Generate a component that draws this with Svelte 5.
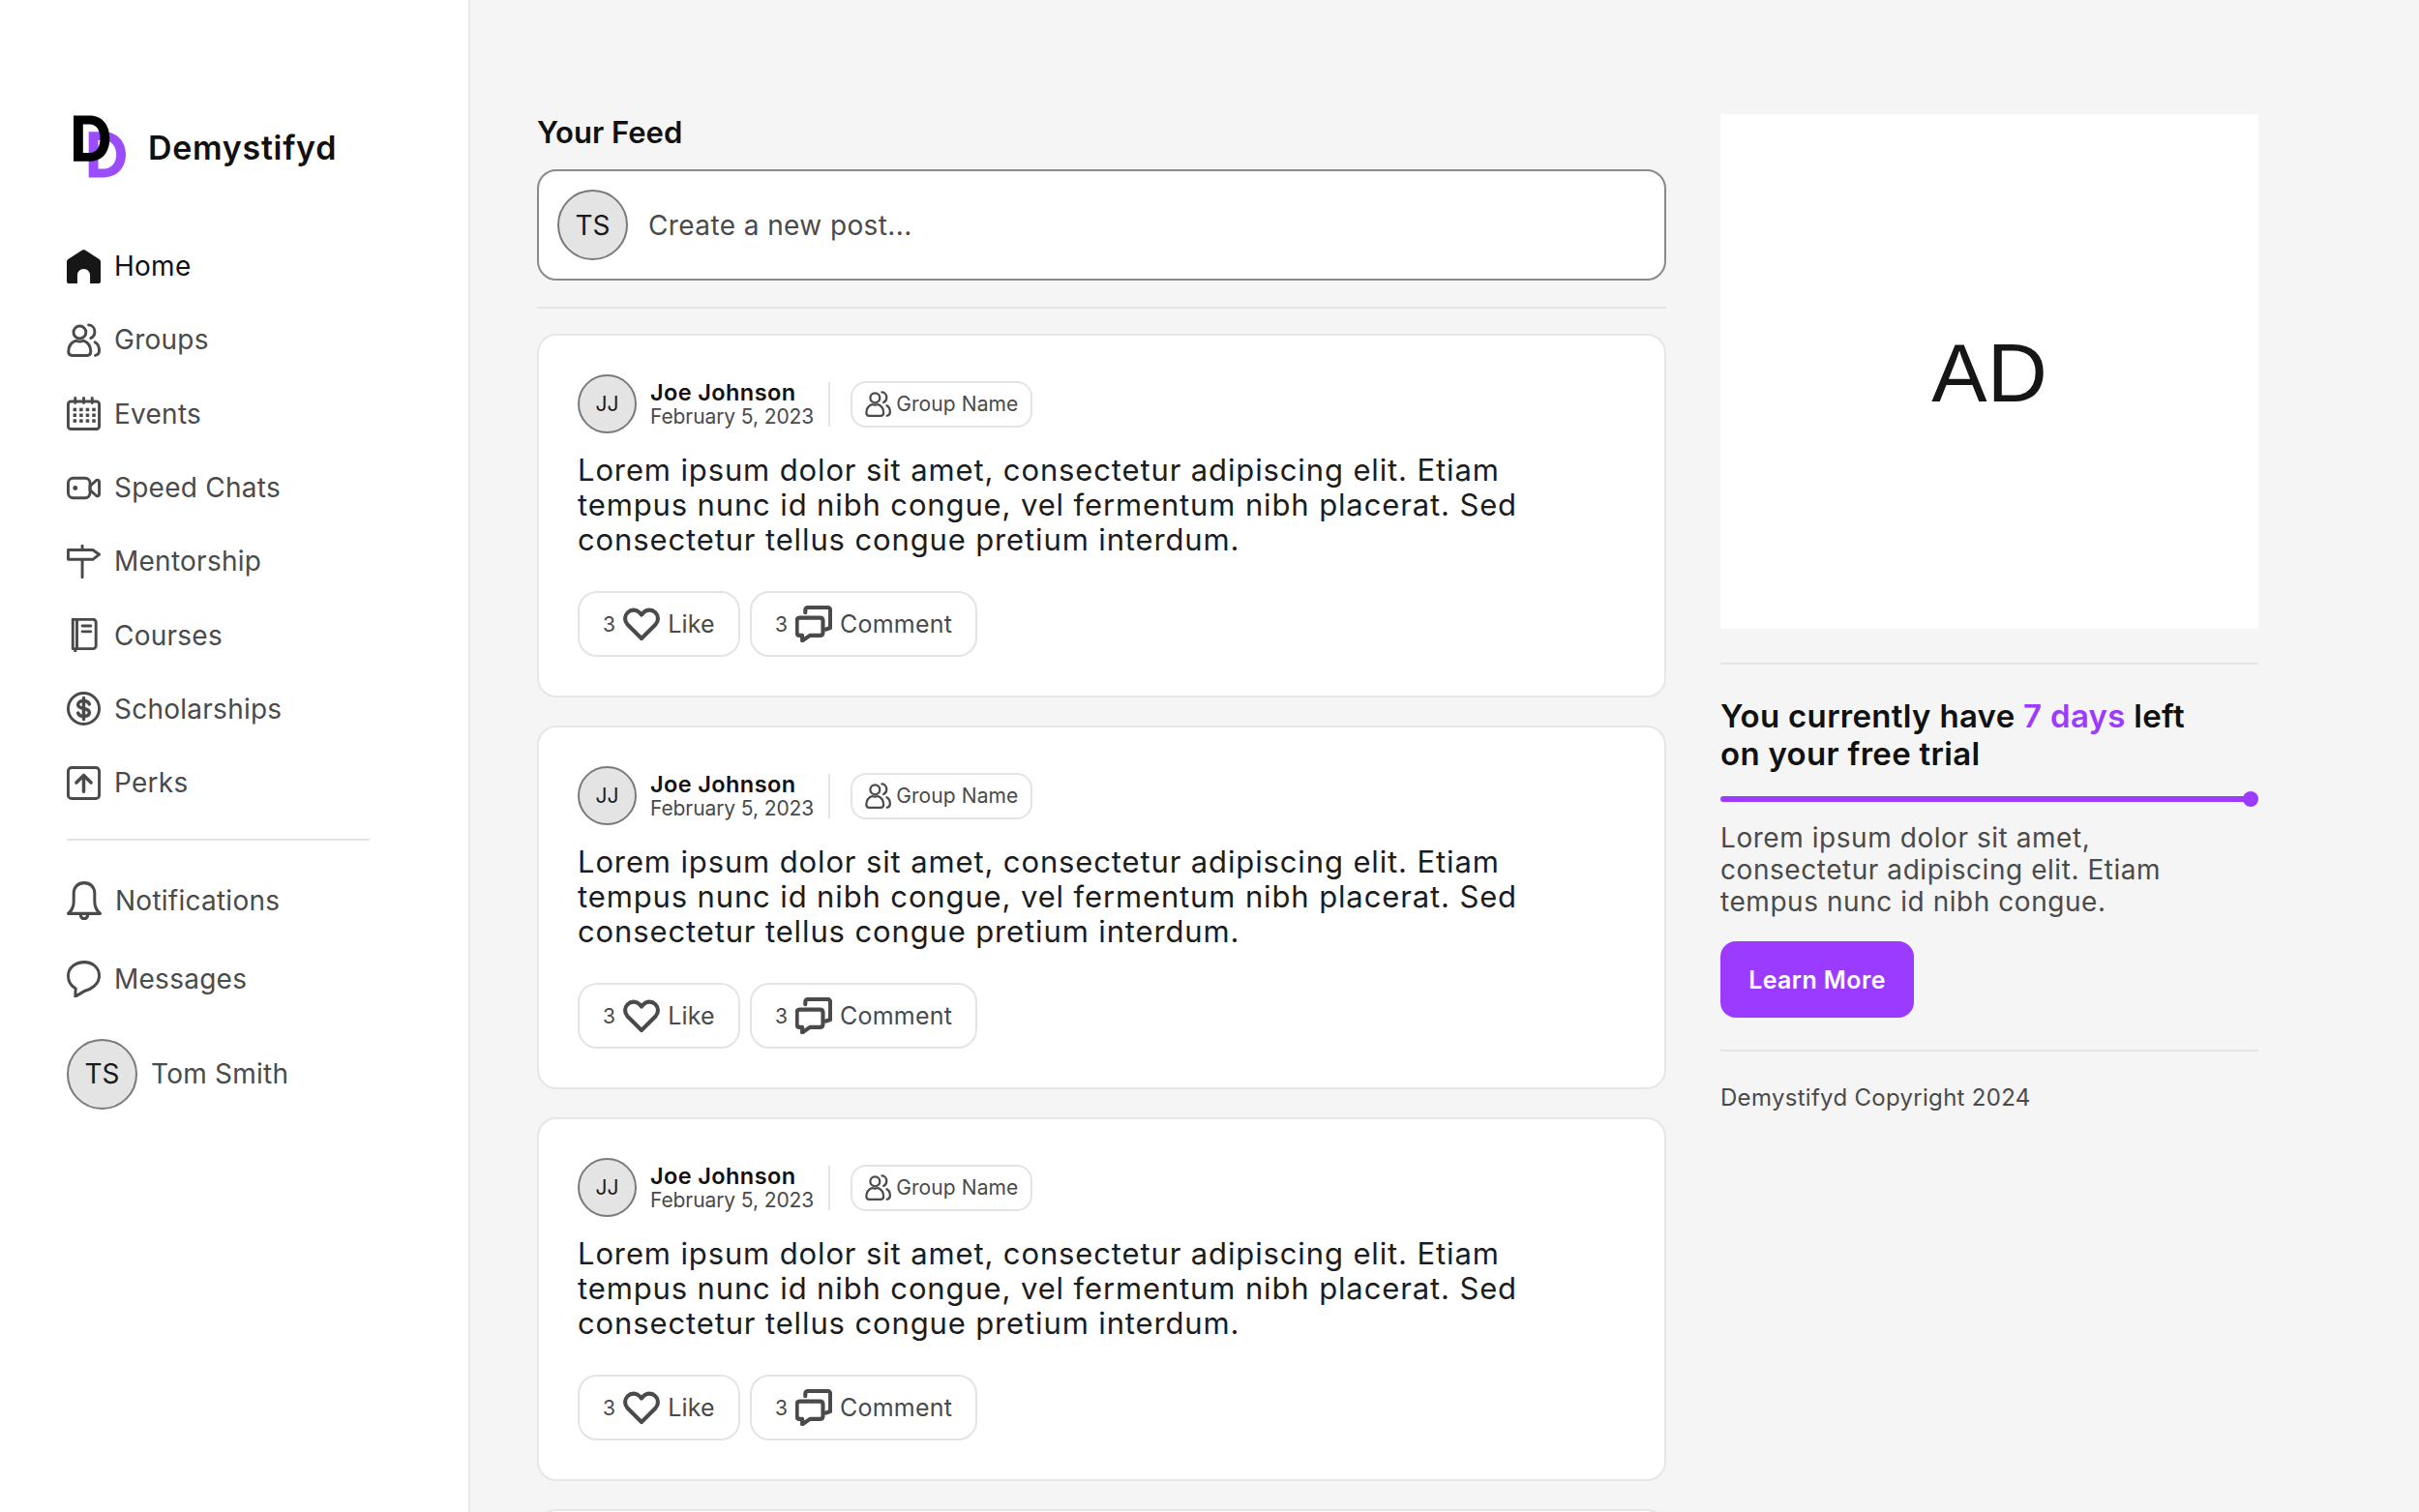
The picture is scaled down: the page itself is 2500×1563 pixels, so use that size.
<script>
  const nav = [
    { label: 'Home', icon: 'home', active: true },
    { label: 'Groups', icon: 'groups' },
    { label: 'Events', icon: 'events' },
    { label: 'Speed Chats', icon: 'video' },
    { label: 'Mentorship', icon: 'sign' },
    { label: 'Courses', icon: 'book' },
    { label: 'Scholarships', icon: 'dollar' },
    { label: 'Perks', icon: 'perks' }
  ];

  const posts = [1, 2, 3];
</script>

{#snippet icon(name)}
  <svg class="icon" viewBox="0 0 24 24" fill="none" stroke="currentColor" stroke-width="2" stroke-linecap="round" stroke-linejoin="round" preserveAspectRatio="none">
    {#if name === 'home'}
      <path fill="#161616" stroke="none" d="M11 .4c.6-.4 1.400-.4 2 0l9.800 6.200c.8.500 1.200 1.200 1.200 2.100V22.400c0 .9-.7 1.600-1.600 1.600H16.500V18.200c0-2.500-2-4.500-4.500-4.500s-4.500 2-4.500 4.500V24H1.600C.7 24 0 23.300 0 22.400V8.700c0-.9.400-1.600 1.200-2.100Z"/>
    {:else if name === 'groups'}
      <circle cx="9.200" cy="6.500" r="4.400"/>
      <path d="M1.200 20.300c0-4.300 2.700-6.800 5.300-7.800 1.700.7 3.600.7 5.300 0 2.600 1 5.200 3.500 5.200 7.800 0 1.700-1 2.700-2.600 2.700H3.800c-1.600 0-2.600-1-2.600-2.700Z"/>
      <path d="M15.500 1.300c2.600.1 4.300 2.300 4.300 4.900 0 2.100-1 3.700-2.800 4.500M20 13.500c2 1.100 3 3.400 3 5.900 0 1.800-.9 3.200-2.800 3.500"/>
    {:else if name === 'events'}
      <rect x="1" y="3.400" width="22" height="19.600" rx="2"/>
      <path d="M6 1v3.500M12 1v3.500M18 1v3.500"/>
      <g fill="currentColor" stroke="none">
        <rect x="4.500" y="8" width="2.400" height="2.400"/><rect x="9" y="8" width="2.400" height="2.400"/><rect x="13.500" y="8" width="2.400" height="2.400"/><rect x="18" y="8" width="2.400" height="2.400"/>
        <rect x="4.500" y="12" width="2.400" height="2.400"/><rect x="9" y="12" width="2.400" height="2.400"/><rect x="13.500" y="12" width="2.400" height="2.400"/><rect x="18" y="12" width="2.400" height="2.400"/>
        <rect x="4.500" y="16" width="2.400" height="2.400"/><rect x="9" y="16" width="2.400" height="2.400"/><rect x="13.500" y="16" width="2.400" height="2.400"/><rect x="18" y="16" width="2.400" height="2.400"/>
      </g>
    {:else if name === 'video'}
      <rect x="1" y="5" width="15.500" height="14" rx="3.500"/>
      <path d="m16.500 10.500 4.500-4c.8-.6 2 0 2 1v9c0 1-1.200 1.600-2 1l-4.500-4Z"/>
      <circle cx="6" cy="12" r=".7" fill="currentColor"/>
    {:else if name === 'sign'}
      <path d="M1 3.800h17.500L23 7 18.500 10.500H1ZM11 .8v3M11 10.500v12.700"/>
    {:else if name === 'book'}
      <path d="M5 .8h13.500c1.200 0 2.200 1 2.200 2.200v16.500c0 1.200-1 2.200-2.200 2.200H4.300V.8ZM7.200 .8v21M6 21.700v2.300M11 5.500h6M11 9.500h6"/>
    {:else if name === 'dollar'}
      <circle cx="12" cy="12" r="11"/>
      <path stroke-width="2.400" d="M16 8.800c-.5-1.400-2-2.300-4-2.300-2.200 0-4 1-4 2.800s1.800 2.300 4 2.700 4 1 4 2.800-1.800 2.700-4 2.700c-2 0-3.500-.9-4-2.300M12 4.500v15"/>
    {:else if name === 'perks'}
      <rect x="1" y="1" width="22" height="22" rx="2.500"/>
      <path stroke-width="2.400" d="M12 18V6.500M6.800 11.700 12 6.500l5.200 5.200"/>
    {:else if name === 'bell'}
      <path d="M1 20c2.500-1.800 3.800-3.800 3.800-7.500V7.500C4.800 3.500 8 1 12 1s7.200 2.500 7.200 6.500v5c0 3.700 1.300 5.700 3.800 7.500ZM9.500 20c0 2 1 3.200 2.500 3.200s2.500-1.200 2.500-3.200"/>
    {:else if name === 'chat'}
      <path d="M12.500 1C18.500 1 23 4.800 23 10c0 5.500-6 8.700-10 9.700L6 23.500l.3-5.300C3 16.500 1 13.500 1 10 1 4.800 6 1 12.500 1Z"/>
    {:else if name === 'heart'}
      <path stroke-width="2.600" d="M12 21.500 2.800 12.300C.7 10 .9 6.500 3 4.500c2.300-2.200 5.700-2 7.800.2L12 6l1.200-1.300c2.100-2.200 5.500-2.400 7.800-.2 2.100 2 2.300 5.500.2 7.800Z"/>
    {:else if name === 'comment'}
      <path stroke-width="2.600" d="M3 8h13c1.200 0 2 .8 2 2v7.500c0 1.200-.8 2-2 2H9.500L4.500 23v-3.500H3c-1.200 0-2-.8-2-2V10c0-1.200.8-2 2-2Z"/>
      <path stroke-width="2.600" d="M6.500 4.500V3c0-1 .7-1.800 1.800-1.800H21c1 0 1.800.8 1.800 1.800v11.500M20 15.500l2.800-1"/>
    {/if}
  </svg>
{/snippet}

<div class="page">
  <aside class="sidebar">
    <div class="brand">
      <svg class="logo" viewBox="0 0 56 66" aria-hidden="true">
        <path fill="#9b4dfc" fill-rule="evenodd" d="M17 18h16c13.500 0 23 10 23 24S46.500 66 33 66H17ZM27 27v30h6c8 0 13-6.500 13-15s-5-15-13-15Z"/>
        <path fill="#000" fill-rule="evenodd" d="M1 1h17c13.500 0 21 10 21 24S31.500 49 18 49H1ZM11 10v30h7c7.500 0 11-6.500 11-15s-3.500-15-11-15Z"/>
      </svg>
      <span class="brand-name">Demystifyd</span>
    </div>

    <nav class="nav">
      {#each nav as item}
        <a class="nav-item" class:active={item.active} href="#{item.icon}">
          {@render icon(item.icon)}
          <span>{item.label}</span>
        </a>
      {/each}
    </nav>

    <hr class="side-rule" />

    <div class="nav lower">
      <a class="nav-item notif" href="#notifications">{@render icon('bell')}<span>Notifications</span></a>
      <a class="nav-item msgs" href="#messages">{@render icon('chat')}<span>Messages</span></a>
      <a class="nav-item user" href="#profile">
        <span class="avatar big">TS</span>
        <span>Tom Smith</span>
      </a>
    </div>
  </aside>

  <main class="feed">
    <h1>Your Feed</h1>
    <div class="composer">
      <span class="avatar big">TS</span>
      <span class="placeholder">Create a new post...</span>
    </div>
    <hr class="feed-rule" />

    <div class="posts">
      {#each posts as post (post)}
        <article class="post">
          <header class="post-head">
            <span class="avatar small">JJ</span>
            <div class="who">
              <strong>Joe Johnson</strong>
              <span>February 5, 2023</span>
            </div>
            <span class="sep"></span>
            <span class="chip">{@render icon('groups')}Group Name</span>
          </header>
          <p class="body">Lorem ipsum dolor sit amet, consectetur adipiscing elit. Etiam<br />tempus nunc id nibh congue, vel fermentum nibh placerat. Sed<br />consectetur tellus congue pretium interdum.</p>
          <div class="actions">
            <button class="action like"><small>3</small>{@render icon('heart')}Like</button>
            <button class="action"><small>3</small>{@render icon('comment')}Comment</button>
          </div>
        </article>
      {/each}
      <article class="post"></article>
    </div>
  </main>

  <aside class="rail">
    <div class="ad">AD</div>
    <hr class="rail-rule first" />
    <h2>You currently have <em>7 days</em> left<br />on your free trial</h2>
    <div class="progress"><span class="dot"></span></div>
    <p class="blurb">Lorem ipsum dolor sit amet,<br />consectetur adipiscing elit. Etiam<br />tempus nunc id nibh congue.</p>
    <button class="learn">Learn More</button>
    <hr class="rail-rule" />
    <p class="copy">Demystifyd Copyright 2024</p>
  </aside>
</div>

<style>
  :global(body) {
    margin: 0;
    background: #f5f5f5;
    overflow: hidden;
  }

  .page {
    display: flex;
    height: 1563px;
    overflow: hidden;
    font-family: Inter, "Liberation Sans", sans-serif;
    color: #4a4a4a;
  }

  hr {
    border: 0;
    height: 2px;
    margin: 0;
    background: #e4e4e4;
  }

  .sidebar {
    box-sizing: border-box;
    width: 486px;
    flex: none;
    padding: 118px 0 0 69px;
    background: #fff;
    border-right: 2px solid #e8e8e8;
  }

  .brand {
    display: flex;
    align-items: center;
    gap: 23px;
    margin-left: 6px;
    height: 66px;
  }

  .logo {
    width: 55px;
    height: 66px;
    flex: none;
  }

  .brand-name {
    font-size: 34px;
    font-weight: 600;
    letter-spacing: .7px;
    color: #111;
    position: relative;
    top: 1px;
  }

  .nav {
    display: flex;
    flex-direction: column;
    margin-top: 53px;
  }

  .nav-item {
    display: flex;
    align-items: center;
    gap: 14px;
    height: 76.300px;
    color: #4a4a4a;
    text-decoration: none;
    font-size: 28px;
    letter-spacing: .25px;
  }

  .nav-item.active {
    color: #111;
  }

  .icon {
    width: 35px;
    height: 35px;
    flex: none;
  }

  .notif .icon {
    width: 36px;
    height: 40px;
  }

  .msgs .icon {
    width: 35px;
    height: 38px;
  }

  .side-rule {
    width: 313px;
    margin-top: 20px;
  }

  .lower {
    margin-top: 23px;
  }

  .msgs {
    margin-top: 5px;
  }

  .user {
    margin-top: 22px;
  }

  .avatar {
    box-sizing: border-box;
    display: flex;
    align-items: center;
    justify-content: center;
    flex: none;
    border: 2px solid #7a7a7a;
    border-radius: 50%;
    background: #e4e4e4;
    color: #1a1a1a;
    letter-spacing: 0;
  }

  .avatar.big {
    width: 73px;
    height: 73px;
    font-size: 28px;
  }

  .avatar.small {
    width: 61px;
    height: 61px;
    font-size: 21px;
  }

  .feed {
    box-sizing: border-box;
    width: 1167px;
    margin-left: 69px;
    flex: none;
    padding-top: 118px;
  }

  h1 {
    margin: 0 0 19px;
    font-size: 31px;
    line-height: 38px;
    font-weight: 600;
    color: #111;
  }

  .composer {
    box-sizing: border-box;
    display: flex;
    align-items: center;
    gap: 21px;
    height: 115px;
    padding: 0 19px;
    background: #fff;
    border: 2px solid #8a8a8a;
    border-radius: 20px;
  }

  .placeholder {
    font-size: 28px;
    letter-spacing: .4px;
  }

  .feed-rule {
    margin: 27px 0 26px;
  }

  .posts {
    display: flex;
    flex-direction: column;
    gap: 29px;
  }

  .post {
    box-sizing: border-box;
    height: 376px;
    flex: none;
    padding: 40px 40px 0;
    background: #fff;
    border: 2px solid #e6e6e6;
    border-radius: 20px;
  }

  .post-head {
    display: flex;
    align-items: center;
    height: 61px;
  }

  .who {
    display: flex;
    flex-direction: column;
    margin-left: 14px;
    font-size: 21px;
    line-height: 25px;
    letter-spacing: -.1px;
  }

  .who strong {
    font-size: 23.500px;
    font-weight: 600;
    letter-spacing: .4px;
    color: #111;
  }

  .sep {
    width: 2px;
    height: 46px;
    margin: 0 21px 0 15px;
    background: #e4e4e4;
  }

  .chip {
    box-sizing: border-box;
    display: flex;
    align-items: center;
    gap: 5px;
    height: 48px;
    padding: 0 13px;
    font-size: 21px;
    letter-spacing: .1px;
    border: 2px solid #e4e4e4;
    border-radius: 16px;
  }

  .chip .icon {
    width: 27px;
    height: 27px;
  }

  .body {
    margin: 20px 0 0;
    font-size: 31px;
    line-height: 36px;
    letter-spacing: .87px;
    color: #1c1c1c;
  }

  .actions {
    display: flex;
    gap: 10px;
    margin-top: 35px;
  }

  .action {
    display: flex;
    align-items: center;
    height: 68px;
    padding: 0 24px;
    font: inherit;
    font-size: 25px;
    letter-spacing: .2px;
    color: #4a4a4a;
    background: #fff;
    border: 2px solid #e4e4e4;
    border-radius: 20px;
  }

  .action small {
    font-size: 21px;
    margin-right: 8px;
  }

  .action .icon {
    width: 38px;
    height: 38px;
    margin-right: 8px;
  }

  .rail {
    box-sizing: border-box;
    width: 556px;
    margin-left: 56px;
    flex: none;
    padding-top: 118px;
  }

  .ad {
    display: flex;
    align-items: center;
    justify-content: center;
    height: 532px;
    padding-top: 3px;
    box-sizing: border-box;
    background: #fff;
    color: #161616;
    font-family: "Liberation Sans", sans-serif;
    font-size: 86px;
  }

  .rail-rule {
    margin: 33px 0 0;
  }

  .rail-rule.first {
    margin: 35px 0 0;
  }

  h2 {
    margin: 34px 0 0;
    font-size: 33px;
    line-height: 39px;
    font-weight: 600;
    letter-spacing: .3px;
    color: #111;
  }

  h2 em {
    font-style: normal;
    color: #9b3bff;
  }

  .progress {
    position: relative;
    height: 6px;
    margin-top: 24px;
    border-radius: 3px;
    background: #9b3bff;
    width: 548px;
  }

  .dot {
    position: absolute;
    right: -8px;
    top: -5px;
    width: 16px;
    height: 16px;
    border-radius: 50%;
    background: #9b3bff;
  }

  .blurb {
    margin: 21px 0 0;
    font-size: 28px;
    line-height: 33px;
    letter-spacing: .55px;
  }

  .learn {
    display: block;
    width: 200px;
    height: 79px;
    margin-top: 24px;
    font: inherit;
    font-size: 25px;
    font-weight: 600;
    letter-spacing: .4px;
    color: #fff;
    background: #9b3bff;
    border: 0;
    border-radius: 16px;
  }

  .copy {
    margin: 33px 0 0;
    font-size: 24px;
    line-height: 30px;
    letter-spacing: .3px;
  }
</style>
